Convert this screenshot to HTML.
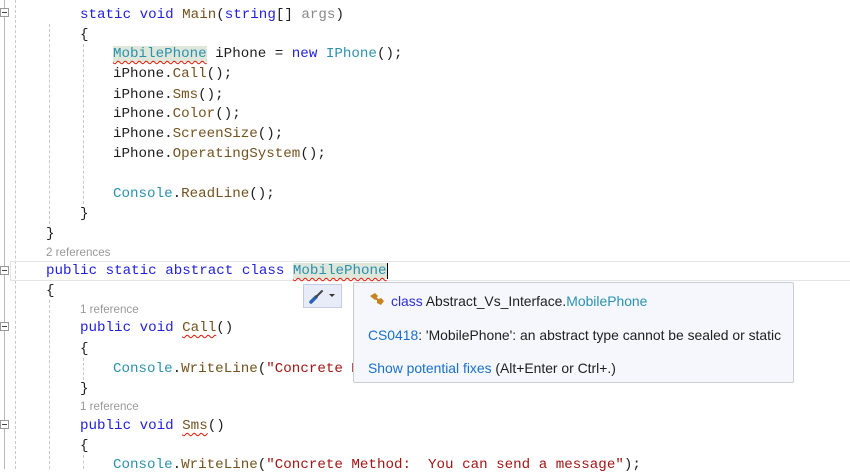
<!DOCTYPE html>
<html><head><meta charset="utf-8"><style>
*{margin:0;padding:0;box-sizing:border-box}
body{width:850px;height:469px;overflow:hidden;background:#fff;position:relative;font-family:"Liberation Mono",monospace}
.l{position:absolute;height:20px;line-height:20px;font-size:14.2px;white-space:pre;color:#1e1e1e;margin-top:1px}
.cl{position:absolute;font-family:"Liberation Sans",sans-serif;font-size:11.6px;color:#999;line-height:14px}
.k{color:#1f1fdc}.t{color:#2b91af}.m{color:#74531f}.s{color:#a31515}.g{color:#888}
.sq{text-decoration:underline wavy #e51400;text-decoration-thickness:1px;text-underline-offset:3px}
.hl{background:#dfe6da}
.guide{position:absolute;width:0;border-left:1px dashed #c8c8c8}
.fold{position:absolute;left:0;width:9px;height:9px;border:1px solid #999;background:#fff}
.fold:after{content:"";position:absolute;left:1px;top:3px;width:5px;height:1px;background:#444}
.tip{position:absolute;left:353px;top:282px;width:441px;height:101px;background:#f5f7fd;border:1px solid #c9cdd6;border-radius:2px;font-family:"Liberation Sans",sans-serif;font-size:13.9px;color:#1e1e1e}
.tip div{position:absolute;left:14px;white-space:nowrap}
.lk{color:#1a70c8}
</style></head><body>
<div style="position:absolute;left:4px;top:0;width:1px;height:469px;background:#b8b8b8"></div>
<div class="fold" style="top:8px"></div>
<div class="fold" style="top:266px"></div>
<div class="fold" style="top:322px"></div>
<div class="fold" style="top:420px"></div>
<div class="guide" style="left:15px;top:0;height:469px"></div>
<div class="guide" style="left:49px;top:24px;height:200px"></div>
<div class="guide" style="left:49px;top:300px;height:169px"></div>
<div class="guide" style="left:83px;top:44px;height:160px"></div>
<div class="guide" style="left:83px;top:358px;height:22px"></div>
<div class="guide" style="left:83px;top:455px;height:14px"></div>
<div style="position:absolute;left:10px;top:261px;width:840px;height:20px;border:1px solid #e4e4e4;border-right:none"></div>

<div class="l" style="left:80px;top:4px"><span class="k">static void</span> <span class="m">Main</span>(<span class="k">string</span>[] <span class="g">args</span>)</div>
<div class="l" style="left:80px;top:24px">{</div>
<div class="l" style="left:113px;top:43px"><span class="t hl sq">MobilePhone</span> iPhone = <span class="k">new</span> <span class="t">IPhone</span>();</div>
<div class="l" style="left:113px;top:63px">iPhone.<span class="m">Call</span>();</div>
<div class="l" style="left:113px;top:84px">iPhone.<span class="m">Sms</span>();</div>
<div class="l" style="left:113px;top:103px">iPhone.<span class="m">Color</span>();</div>
<div class="l" style="left:113px;top:123px">iPhone.<span class="m">ScreenSize</span>();</div>
<div class="l" style="left:113px;top:143px">iPhone.<span class="m">OperatingSystem</span>();</div>
<div class="l" style="left:113px;top:183px"><span class="t">Console</span>.<span class="m">ReadLine</span>();</div>
<div class="l" style="left:80px;top:203px">}</div>
<div class="l" style="left:46px;top:223px">}</div>
<div class="cl" style="left:46px;top:246px">2 references</div>
<div class="l" style="left:46px;top:260px"><span class="k">public static abstract class</span> <span class="t hl sq">MobilePhone</span><span style="border-left:1px solid #000"></span></div>
<div class="l" style="left:46px;top:280px">{</div>
<div class="cl" style="left:80px;top:303px">1 reference</div>
<div class="l" style="left:80px;top:317px"><span class="k">public void</span> <span class="m sq">Call</span>()</div>
<div class="l" style="left:80px;top:338px">{</div>
<div class="l" style="left:113px;top:358px"><span class="t">Console</span>.<span class="m">WriteLine</span>(<span class="s">"Concrete Method:  You can make a call"</span>);</div>
<div class="l" style="left:80px;top:378px">}</div>
<div class="cl" style="left:80px;top:400px">1 reference</div>
<div class="l" style="left:80px;top:415px"><span class="k">public void</span> <span class="m sq">Sms</span>()</div>
<div class="l" style="left:80px;top:435px">{</div>
<div class="l" style="left:113px;top:454px"><span class="t">Console</span>.<span class="m">WriteLine</span>(<span class="s">"Concrete Method:  You can send a message"</span>);</div>

<div style="position:absolute;left:303px;top:284px;width:39px;height:24px;background:#e8ecf8;border:1px solid #c5cce0">
<svg width="39" height="24" style="position:absolute;left:-1px;top:-1px"><path d="M8 18 L13 13" stroke="#2a62b8" stroke-width="3.5" stroke-linecap="round"/><path d="M13 13 L19 7" stroke="#444" stroke-width="2" stroke-linecap="round"/><path d="M26 10 L32 10 L29 13 Z" fill="#333"/></svg></div>

<div class="tip">
<svg width="20" height="16" style="position:absolute;left:14px;top:9px"><path d="M2 4 L7 1 L10 4 L7 8 Z M9 8 L13 6 L16 9 L13 13 L9 11 Z" fill="#c8821e"/><path d="M7 6 L12 9" stroke="#c8821e" stroke-width="2"/></svg>
<div style="left:37px;top:10px"><span style="color:#2d2dd8">class</span> Abstract_Vs_Interface.<span class="t">MobilePhone</span></div>
<div style="top:44px"><span class="lk">CS0418</span>: 'MobilePhone': an abstract type cannot be sealed or static</div>
<div style="top:77px"><span class="lk">Show potential fixes</span> (Alt+Enter or Ctrl+.)</div>
</div>
</body></html>
